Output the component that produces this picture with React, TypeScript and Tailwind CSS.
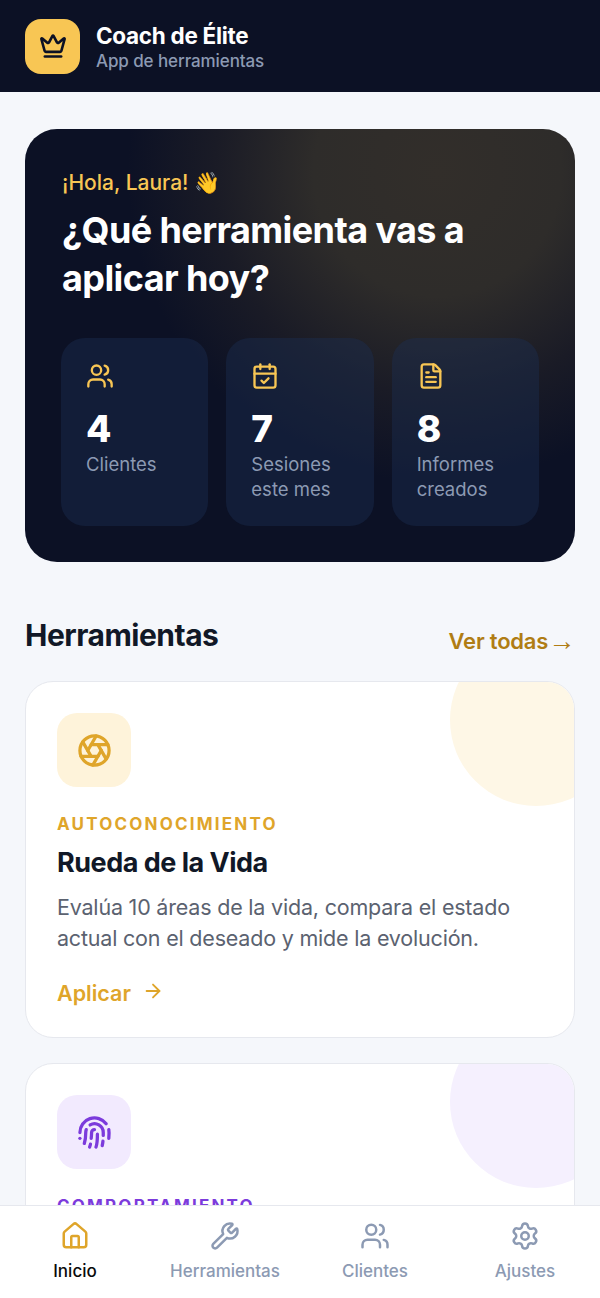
import { Crown, Users, CalendarCheck, FileText, Aperture, Fingerprint, House, Wrench, Settings, ArrowRight } from 'lucide-react';

const stats = [
  { icon: Users, value: '4', label: 'Clientes' },
  { icon: CalendarCheck, value: '7', label: 'Sesiones este mes' },
  { icon: FileText, value: '8', label: 'Informes creados' },
];

const navItems = [
  { icon: House, label: 'Inicio', active: true },
  { icon: Wrench, label: 'Herramientas', active: false },
  { icon: Users, label: 'Clientes', active: false },
  { icon: Settings, label: 'Ajustes', active: false },
];

export default function App() {
  return (
    <div className="h-[1298px] flex flex-col overflow-hidden bg-[#f5f7fb] font-['Inter',sans-serif]">
      <header className="h-[92px] shrink-0 bg-[#0c1125] flex items-center px-[25px] gap-4">
        <div className="w-[55px] h-[55px] rounded-[16px] bg-[#f8c654] flex items-center justify-center">
          <Crown size={28} strokeWidth={2.25} className="text-[#0c1125]" />
        </div>
        <div className="pt-[2px]">
          <div className="text-[22.5px] leading-[28px] font-bold text-white tracking-[-0.3px]">Coach de Élite</div>
          <div className="text-[17px] leading-[22px] font-medium text-[#8c9ab3] tracking-[-0.1px]">App de herramientas</div>
        </div>
      </header>

      <main className="flex-1 min-h-0 overflow-hidden px-[25px] pt-[37px]">
        <section className="h-[433px] rounded-[32px] px-[36px] pt-[41px] bg-[radial-gradient(circle_310px_at_75%_10%,#322e2a_0%,#2e2c2a_40%,#1a1b26_72%,#0c1125_100%)]">
          <div className="pl-px text-[21px] leading-[26px] font-medium text-[#f8c654]">¡Hola, Laura! 👋</div>
          <h1 className="pl-px mt-[10px] text-[36px] leading-[48px] font-bold text-white tracking-[-0.6px]">¿Qué herramienta vas a aplicar hoy?</h1>
          <div className="mt-[36px] grid grid-cols-3 gap-[18px]">
            {stats.map((s) => (
              <div key={s.value} className="h-[188px] rounded-[24px] bg-[#1c2f55]/40 pl-[25px] pr-2 pt-[24px]">
                <s.icon size={28} strokeWidth={2} className="text-[#f8c654]" />
                <div className="mt-[15px] text-[37px] leading-[48px] font-extrabold text-white">{s.value}</div>
                <div className="-mt-[1px] text-[18.5px] leading-[25px] text-[#8c9ab3]">{s.label}</div>
              </div>
            ))}
          </div>
        </section>

        <div className="mt-[54px] h-[38px] flex items-center justify-between">
          <h2 className="text-[30px] leading-[38px] font-bold text-[#111827] tracking-[-0.5px]">Herramientas</h2>
          <a className="mt-[13px] flex items-center text-[22px] font-semibold text-[#b07d14] tracking-[-0.2px]">
            Ver todas <span className="font-['Liberation_Sans',sans-serif] text-[27px] leading-none font-normal">→</span>
          </a>
        </div>

        <article className="relative mt-[27px] h-[357px] rounded-[28px] border border-[#e6e8ee] bg-white overflow-hidden pl-[31px] pt-[31px]">
          <div className="absolute -right-[48px] -top-[48px] w-[172px] h-[172px] rounded-full bg-[#fef7e6]" />
          <div className="w-[74px] h-[74px] rounded-[20px] bg-[#fef3da] flex items-center justify-center">
            <Aperture size={35} strokeWidth={2.25} className="text-[#dfa52a]" />
          </div>
          <div className="mt-[26px] text-[17px] leading-[22px] font-bold tracking-[2.2px] text-[#dfa52a]">AUTOCONOCIMIENTO</div>
          <h3 className="mt-[10px] text-[27px] leading-[36px] font-bold text-[#111827] tracking-[-0.5px]">Rueda de la Vida</h3>
          <p className="mt-[11px] text-[21.5px] leading-[31px] text-[#5b6270] tracking-[-0.2px]">Evalúa 10 áreas de la vida, compara el estado actual con el deseado y mide la evolución.</p>
          <div className="mt-[23px] flex items-center gap-[11px] text-[#dfa52a]">
            <span className="text-[21.5px] font-semibold">Aplicar</span>
            <ArrowRight size={22} strokeWidth={2} className="-mt-[4px]" />
          </div>
        </article>

        <article className="relative mt-[25px] h-[358px] rounded-[28px] border border-[#e6e8ee] bg-white overflow-hidden pl-[31px] pt-[31px]">
          <div className="absolute -right-[48px] -top-[48px] w-[172px] h-[172px] rounded-full bg-[#f5f0fe]" />
          <div className="w-[74px] h-[74px] rounded-[20px] bg-[#f2eafe] flex items-center justify-center">
            <Fingerprint size={35} strokeWidth={2.25} className="text-[#7c3bdc]" />
          </div>
          <div className="mt-[26px] text-[17px] leading-[22px] font-bold tracking-[2.2px] text-[#7c3bdc]">COMPORTAMIENTO</div>
        </article>
      </main>

      <nav className="h-[93px] shrink-0 bg-white border-t border-[#e6e8ee] grid grid-cols-4 pt-[15px]">
        {navItems.map((n) => (
          <div key={n.label} className="flex flex-col items-center">
            <n.icon size={30} strokeWidth={2} className={n.active ? 'text-[#dfa52a]' : 'text-[#8c9ab3]'} />
            <span className={`mt-[9px] text-[17px] leading-[22px] font-medium ${n.active ? 'text-[#0a0a0a]' : 'text-[#8c9ab3]'}`}>{n.label}</span>
          </div>
        ))}
      </nav>
    </div>
  );
}
